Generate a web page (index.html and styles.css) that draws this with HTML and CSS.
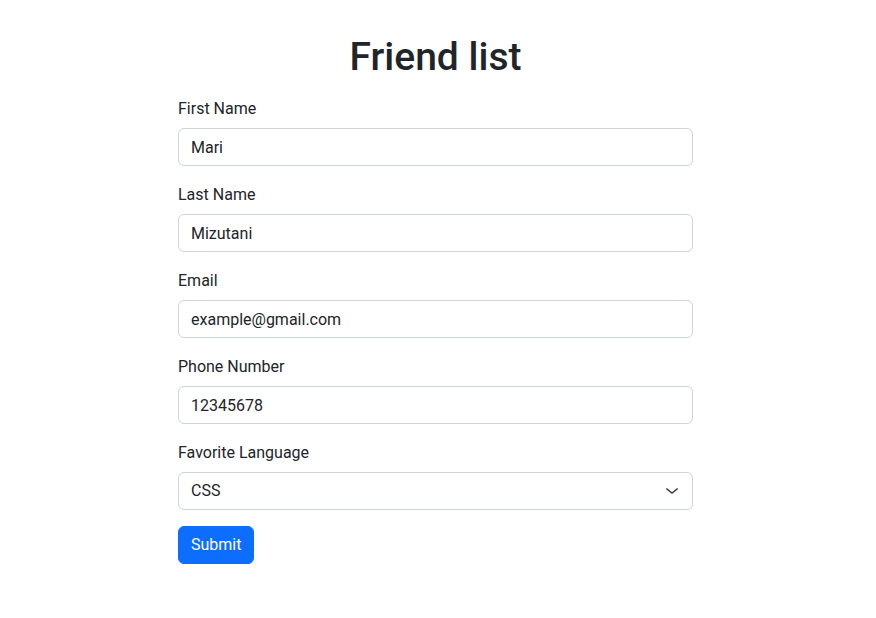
FILE: index.html
```html
<!DOCTYPE html>
<html>
<head>
<meta charset="utf-8">
<link rel="stylesheet" href="styles.css">
</head>
<body>
<div class="page">
  <h1 class="title">Friend list</h1>
  <form class="form">
    <div class="group">
      <label class="label" for="fn">First Name</label>
      <input class="control" id="fn" type="text" value="Mari">
    </div>
    <div class="group">
      <label class="label" for="ln">Last Name</label>
      <input class="control" id="ln" type="text" value="Mizutani">
    </div>
    <div class="group">
      <label class="label" for="em">Email</label>
      <input class="control" id="em" type="email" value="example@gmail.com">
    </div>
    <div class="group">
      <label class="label" for="ph">Phone Number</label>
      <input class="control" id="ph" type="text" value="12345678">
    </div>
    <div class="group">
      <label class="label" for="lang">Favorite Language</label>
      <div class="select-wrap">
        <select class="control select" id="lang">
          <option>CSS</option>
          <option>HTML</option>
          <option>JavaScript</option>
        </select>
        <svg class="chevron" width="16" height="12" viewBox="0 0 16 16" preserveAspectRatio="none"><path d="M2.8 5.2l5.2 5.6 5.2-5.6" fill="none" stroke="#343a40" stroke-width="1.8" stroke-linecap="round" stroke-linejoin="round"/></svg>
      </div>
    </div>
    <button class="btn" type="button">Submit</button>
  </form>
</div>
</body>
</html>
```

FILE: styles.css
```css
* { box-sizing: border-box; }
html, body { margin: 0; padding: 0; background: #fff; }
body {
  font-family: Roboto, "Liberation Sans", sans-serif;
  font-size: 16px;
  line-height: 1.5;
  color: #212529;
}
.page {
  width: 515px;
  margin-left: 178px;
}
.title {
  margin: 33px 0 15px;
  font-size: 39px;
  font-weight: 500;
  line-height: 48px;
  text-align: center;
}
.form { display: flex; flex-direction: column; }
.group { display: flex; flex-direction: column; margin-bottom: 16px; }
.label { margin-bottom: 8px; line-height: 24px; position: relative; top: 1px; }
.control {
  display: block;
  width: 100%;
  height: 38px;
  padding: 6px 12px;
  font: inherit;
  line-height: 24px;
  color: #212529;
  background: #fff;
  border: 1px solid #ced4da;
  border-radius: 6px;
  appearance: none;
  -webkit-appearance: none;
  outline: none;
}
.select-wrap { position: relative; }
.select { padding-right: 36px; }
.chevron { position: absolute; right: 13px; top: 13px; pointer-events: none; }
.btn {
  align-self: flex-start;
  height: 38px;
  padding: 6px 12px;
  font: inherit;
  line-height: 24px;
  color: #fff;
  background: #0d6efd;
  border: 1px solid #0d6efd;
  border-radius: 6px;
}
```
